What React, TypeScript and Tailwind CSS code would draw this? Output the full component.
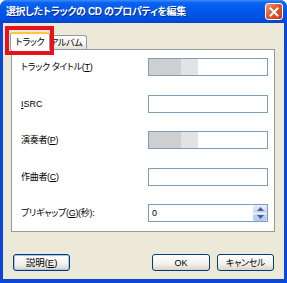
import React from 'react';

interface Field {
    label: string;
    key: string;
    suffix?: string;
    blurred?: boolean;
    spin?: boolean;
    value?: string;
}

const fields: Field[] = [
    { label: "トラック タイトル", key: "T", blurred: true },
    { label: "", key: "I", suffix: "SRC" },
    { label: "演奏者", key: "P", blurred: true },
    { label: "作曲者", key: "C" },
    { label: "プリギャップ", key: "G", suffix: "(秒):", spin: true, value: "0" },
];

const Label: React.FC<{ f: Field }> = ({ f }) => {
    if (f.key === "I") {
        return (
            <span className="text-[9px] leading-[12px] text-black">
                <u>I</u>SRC
            </span>
        );
    }
    return (
        <span className="text-[9px] leading-[12px] tracking-[-0.3px] text-black">
            {f.label}(<u>{f.key}</u>){f.suffix}
        </span>
    );
};

const Spinner: React.FC = () => (
    <div className="w-[15px] h-full flex flex-col border-l border-white">
        <div className="flex-1 flex items-center justify-center bg-[linear-gradient(180deg,#e6eefc,#c1d3fb)] rounded-t-[2px]">
            <svg width="7" height="4" viewBox="0 0 7 4"><path d="M0 4 L3.5 0 L7 4 Z" fill="#4d6185" /></svg>
        </div>
        <div className="flex-1 flex items-center justify-center bg-[linear-gradient(180deg,#c1d3fb,#b4c8f6)] rounded-b-[2px] border-t border-white">
            <svg width="7" height="4" viewBox="0 0 7 4"><path d="M0 0 L3.5 4 L7 0 Z" fill="#4d6185" /></svg>
        </div>
    </div>
);

export default function App() {
    return (
        <div className="relative w-[287px] h-[283px] flex flex-col bg-[#0a46d8] rounded-t-[7px] overflow-hidden [font-family:'Liberation_Sans','Noto_Sans_CJK_JP',sans-serif] [font-feature-settings:'palt']">
            {/* title bar */}
            <div className="h-[23px] flex items-center pl-[6px] pr-[4px] bg-[linear-gradient(180deg,#3d8cf8_0%,#0a63f2_12%,#0058ea_45%,#0050e0_80%,#0044cf_100%)]">
                <span className="flex-1 text-white font-bold text-[10px] leading-[12px] tracking-[-0.4px] [text-shadow:1px_1px_0_#0a2a9a]">
                    選択したトラックの CD のプロパティを編集
                </span>
                <div className="w-[18px] h-[17px] rounded-[3px] border border-white bg-[linear-gradient(135deg,#f29b7a,#e0582f_45%,#c43a18)] flex items-center justify-center">
                    <svg width="10" height="10" viewBox="0 0 10 10">
                        <path d="M1.5 1.5 L8.5 8.5 M8.5 1.5 L1.5 8.5" stroke="#fff" strokeWidth="2" strokeLinecap="square" />
                    </svg>
                </div>
            </div>

            {/* body */}
            <div className="flex-1 mx-[3px] mb-[4px] bg-[#ece9d8] flex flex-col pl-[8px] pr-[9px]">
                {/* tabs */}
                <div className="flex items-end pt-[9px] -ml-[1px]">
                    <div className="relative z-10 w-[40px] h-[18px] -mb-[1px] bg-white border border-[#919b9c] border-b-0 border-t-[2px] border-t-[#ffc83c] rounded-t-[3px] flex items-center justify-center text-[9px] leading-[12px] tracking-[-0.3px] text-black">
                        トラック
                    </div>
                    <div className="w-[37px] h-[14px] bg-[linear-gradient(180deg,#ffffff,#f3f2ec_60%,#e4e2d8)] border border-[#919b9c] border-b-0 border-l-0 rounded-tr-[3px] flex items-center justify-start text-[9px] leading-[12px] tracking-[-0.3px] text-black whitespace-nowrap">
                        <span>アルバム</span>
                    </div>
                </div>

                {/* panel */}
                <div className="h-[183px] bg-white border border-[#919b9c] pl-[9px] pr-[6px] pt-[8px] flex flex-col gap-[18.5px]">
                    {fields.map((f) => (
                        <div key={f.key} className="h-[18px] flex items-center justify-between">
                            <Label f={f} />
                            <div className="w-[120px] h-[18px] border border-[#7f9db9] bg-white flex items-stretch">
                                {f.blurred && (
                                    <div className="flex">
                                        <div className="w-[32px] bg-[#cfcfd1]" />
                                        <div className="w-[17px] bg-[#e3e3e5]" />
                                    </div>
                                )}
                                {f.value && (
                                    <span className="flex-1 pl-[3px] text-[9px] leading-[16px] text-black">{f.value}</span>
                                )}
                                {f.spin && <Spinner />}
                            </div>
                        </div>
                    ))}
                </div>

                {/* buttons */}
                <div className="flex items-center mt-[22px] pl-[2px] pr-[1px]">
                    <button className="w-[57px] h-[17px] rounded-[3px] border border-[#003c74] bg-[linear-gradient(180deg,#ffffff,#f2f1eb_60%,#d9d4c8)] shadow-[inset_0_0_0_1px_#a8c4ee] text-[9.5px] leading-[12px] text-black flex items-center justify-center">
                        説明(<u>E</u>)
                    </button>
                    <div className="flex-1" />
                    <button className="w-[58px] h-[17px] rounded-[3px] border border-[#003c74] bg-[linear-gradient(180deg,#ffffff,#f2f1eb_60%,#d9d4c8)] text-[9px] leading-[12px] text-black flex items-center justify-center">
                        OK
                    </button>
                    <button className="ml-[7px] w-[57px] h-[17px] rounded-[3px] border border-[#003c74] bg-[linear-gradient(180deg,#ffffff,#f2f1eb_60%,#d9d4c8)] text-[9px] leading-[12px] tracking-[-0.3px] text-black flex items-center justify-center">
                        キャンセル
                    </button>
                </div>
            </div>

            {/* red annotation box */}
            <div className="absolute left-[5px] top-[26px] w-[49px] h-[29px] border-[4px] border-[#e8101a]" />
        </div>
    );
}
